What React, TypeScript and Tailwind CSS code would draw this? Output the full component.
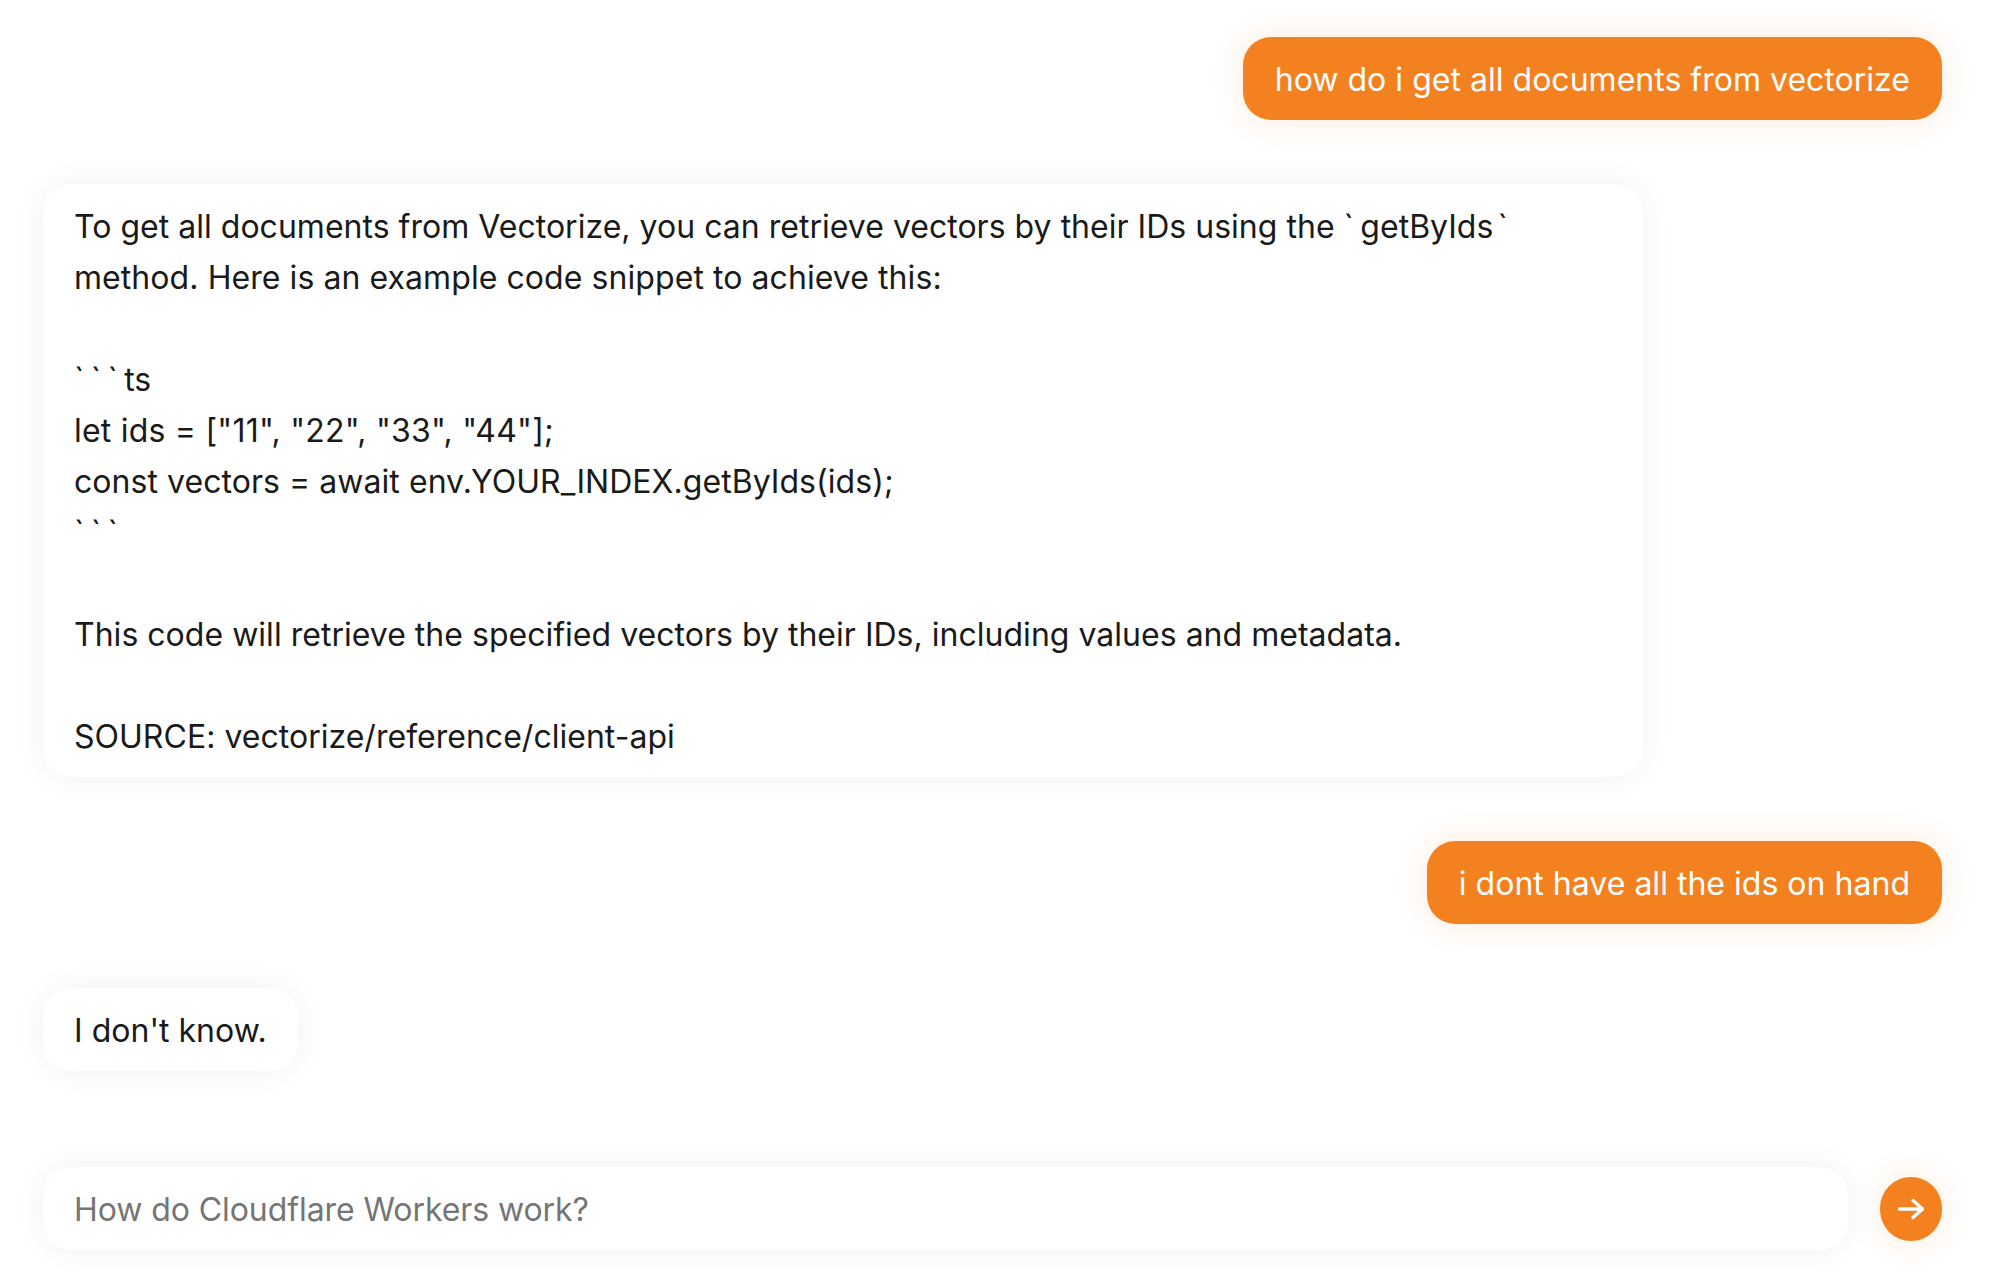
import React from 'react';

const inter = 'font-["Inter",_"Liberation_Sans",_sans-serif]';

function Ticks({ text }: { text: string }) {
    return <span className="tracking-[6.4px]">{text}</span>;
}

function UserBubble({ text }: { text: string }) {
    return (
        <div className="flex justify-end">
            <div className="rounded-[28px] bg-[#f48120] pb-[15px] pl-8 pr-8 pt-[17px] text-white shadow-[0_0_32px_rgba(244,129,32,0.16)]">
                {text}
            </div>
        </div>
    );
}

function BotBubble({ wide, children }: { wide?: boolean; children: React.ReactNode }) {
    return (
        <div className="flex justify-start">
            <div className={`${wide ? 'w-[1600px] pr-[33px]' : 'pr-[31px]'} rounded-[28px] bg-white pb-[15px] pl-[31px] pt-[17px] text-[#1a1a1a] shadow-[0_0_32px_rgba(0,0,0,0.06)]`}>
                {children}
            </div>
        </div>
    );
}

export default function App() {
    return (
        <div className={`${inter} flex h-[1274px] flex-col overflow-hidden bg-white pb-6 pl-[43px] pr-[60px] pt-[37px] text-[32px] leading-[51px] tracking-[0.02px]`}>
            <div className="flex flex-1 flex-col gap-16">
                <UserBubble text="how do i get all documents from vectorize" />
                <BotBubble wide>
                    <div className="whitespace-pre">
                        <span>To get all documents from Vectorize, you can retrieve vectors by their IDs using the </span>
                        <Ticks text="`" />
                        <span>getByIds</span>
                        <span className="ml-1">`</span>
                    </div>
                    <div className="tracking-[0.07px]">method. Here is an example code snippet to achieve this:</div>
                    <div className="h-[51px]" />
                    <div>
                        <Ticks text="```" />
                        <span>ts</span>
                    </div>
                    <div className="tracking-[0.22px]">let ids = ["11", "22", "33", "44"];</div>
                    <div className="tracking-[0.05px]">const vectors = await env.YOUR_INDEX.getByIds(ids);</div>
                    <div>
                        <Ticks text="```" />
                    </div>
                    <div className="h-[51px]" />
                    <div>This code will retrieve the specified vectors by their IDs, including values and metadata.</div>
                    <div className="h-[51px]" />
                    <div>SOURCE: vectorize/reference/client-api</div>
                </BotBubble>
                <UserBubble text="i dont have all the ids on hand" />
                <BotBubble>I don't know.</BotBubble>
            </div>
            <div className="flex items-center gap-8">
                <input
                    readOnly
                    placeholder="How do Cloudflare Workers work?"
                    className="h-[83px] flex-1 rounded-[28px] bg-white pl-[31px] pr-8 pt-0.5 tracking-[-0.08px] text-[#1a1a1a] shadow-[0_0_32px_rgba(0,0,0,0.06)] outline-none placeholder:text-[#757575]"
                />
                <button className="flex h-16 w-[62px] items-center justify-center rounded-full bg-[#f48120] shadow-[0_0_32px_rgba(244,129,32,0.16)]">
                    <svg width="30" height="24" viewBox="0 0 30 24" fill="none" stroke="white" strokeWidth="3.4" strokeLinecap="round" strokeLinejoin="round">
                        <path d="M3.5 12H26" />
                        <path d="M17 3.5L26.5 12L17 20.5" />
                    </svg>
                </button>
            </div>
        </div>
    );
}
